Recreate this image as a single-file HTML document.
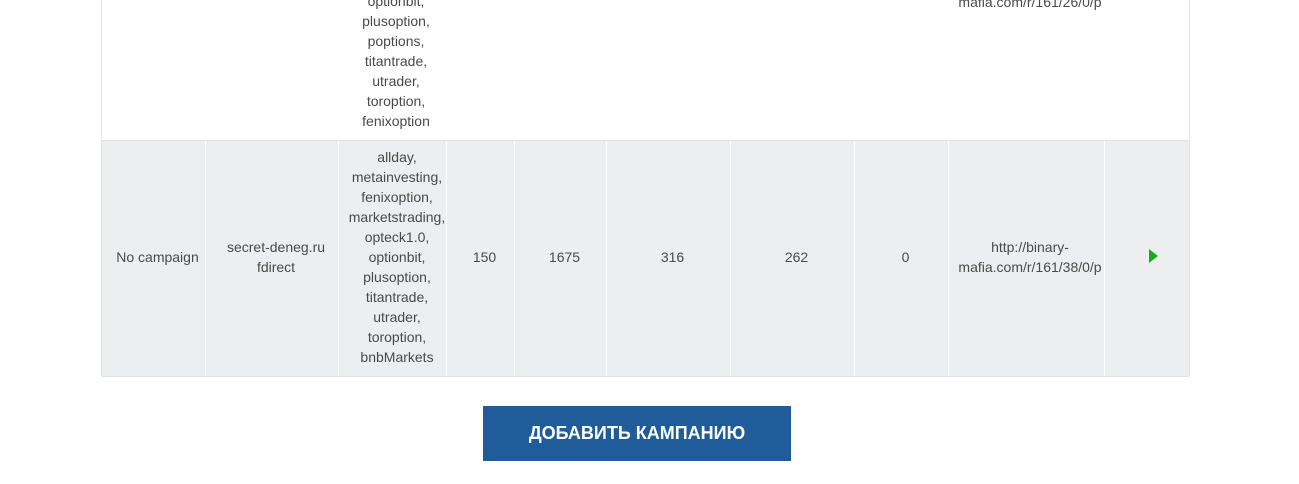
<!DOCTYPE html>
<html><head><meta charset="utf-8"><style>
body{margin:0;width:1299px;height:484px;background:#fff;position:relative;overflow:hidden;font-family:"Liberation Sans",Arial,sans-serif;font-size:14px;color:#4a4a4a;}
.a{position:absolute;}
.t{position:absolute;text-align:center;line-height:20px;white-space:nowrap;}
.vlw{position:absolute;width:1px;background:#fff;}
</style></head><body>
<div class="a" style="left:101px;top:0;width:1px;height:376px;background:#e2e2e2"></div>
<div class="a" style="left:1189px;top:0;width:1px;height:376px;background:#e2e2e2"></div>
<div class="a" style="left:102px;top:140px;width:1087px;height:235px;background:#edeeef;border-top:1px solid #e2e2e2;border-bottom:1px solid #e2e2e2"></div>
<div class="vlw" style="left:205px;top:141px;height:235px"></div>
<div class="vlw" style="left:338px;top:141px;height:235px"></div>
<div class="vlw" style="left:446px;top:141px;height:235px"></div>
<div class="vlw" style="left:514px;top:141px;height:235px"></div>
<div class="vlw" style="left:606px;top:141px;height:235px"></div>
<div class="vlw" style="left:730px;top:141px;height:235px"></div>
<div class="vlw" style="left:854px;top:141px;height:235px"></div>
<div class="vlw" style="left:948px;top:141px;height:235px"></div>
<div class="vlw" style="left:1104px;top:141px;height:235px"></div>

<div class="t" style="left:342px;width:108px;top:-9px">optionbit,<br>plusoption,<br>poptions,<br>titantrade,<br>utrader,<br>toroption,<br>fenixoption</div>
<div class="t" style="left:952px;width:156px;top:-8px">mafia.com/r/161/26/0/p</div>

<div class="t" style="left:106px;width:103px;top:247px">No campaign</div>
<div class="t" style="left:210px;width:132px;top:237px">secret-deneg.ru<br>fdirect</div>
<div class="t" style="left:343px;width:108px;top:147px">allday,<br>metainvesting,<br>fenixoption,<br>marketstrading,<br>opteck1.0,<br>optionbit,<br>plusoption,<br>titantrade,<br>utrader,<br>toroption,<br>bnbMarkets</div>
<div class="t" style="left:451px;width:67px;top:247px">150</div>
<div class="t" style="left:519px;width:91px;top:247px">1675</div>
<div class="t" style="left:611px;width:123px;top:247px">316</div>
<div class="t" style="left:735px;width:123px;top:247px">262</div>
<div class="t" style="left:859px;width:93px;top:247px">0</div>
<div class="t" style="left:952px;width:156px;top:237px">http://binary-<br>mafia.com/r/161/38/0/p</div>
<div class="a" style="left:1149px;top:249px;width:0;height:0;border-left:9px solid #1aaa1a;border-top:7px solid transparent;border-bottom:7px solid transparent"></div>

<div class="a" style="left:483px;top:406px;width:308px;height:55px;background:#1f5c99;color:#fff;font-weight:bold;font-size:18px;line-height:55px;text-align:center;font-family:'Liberation Sans','DejaVu Sans',sans-serif">ДОБАВИТЬ КАМПАНИЮ</div>
</body></html>
